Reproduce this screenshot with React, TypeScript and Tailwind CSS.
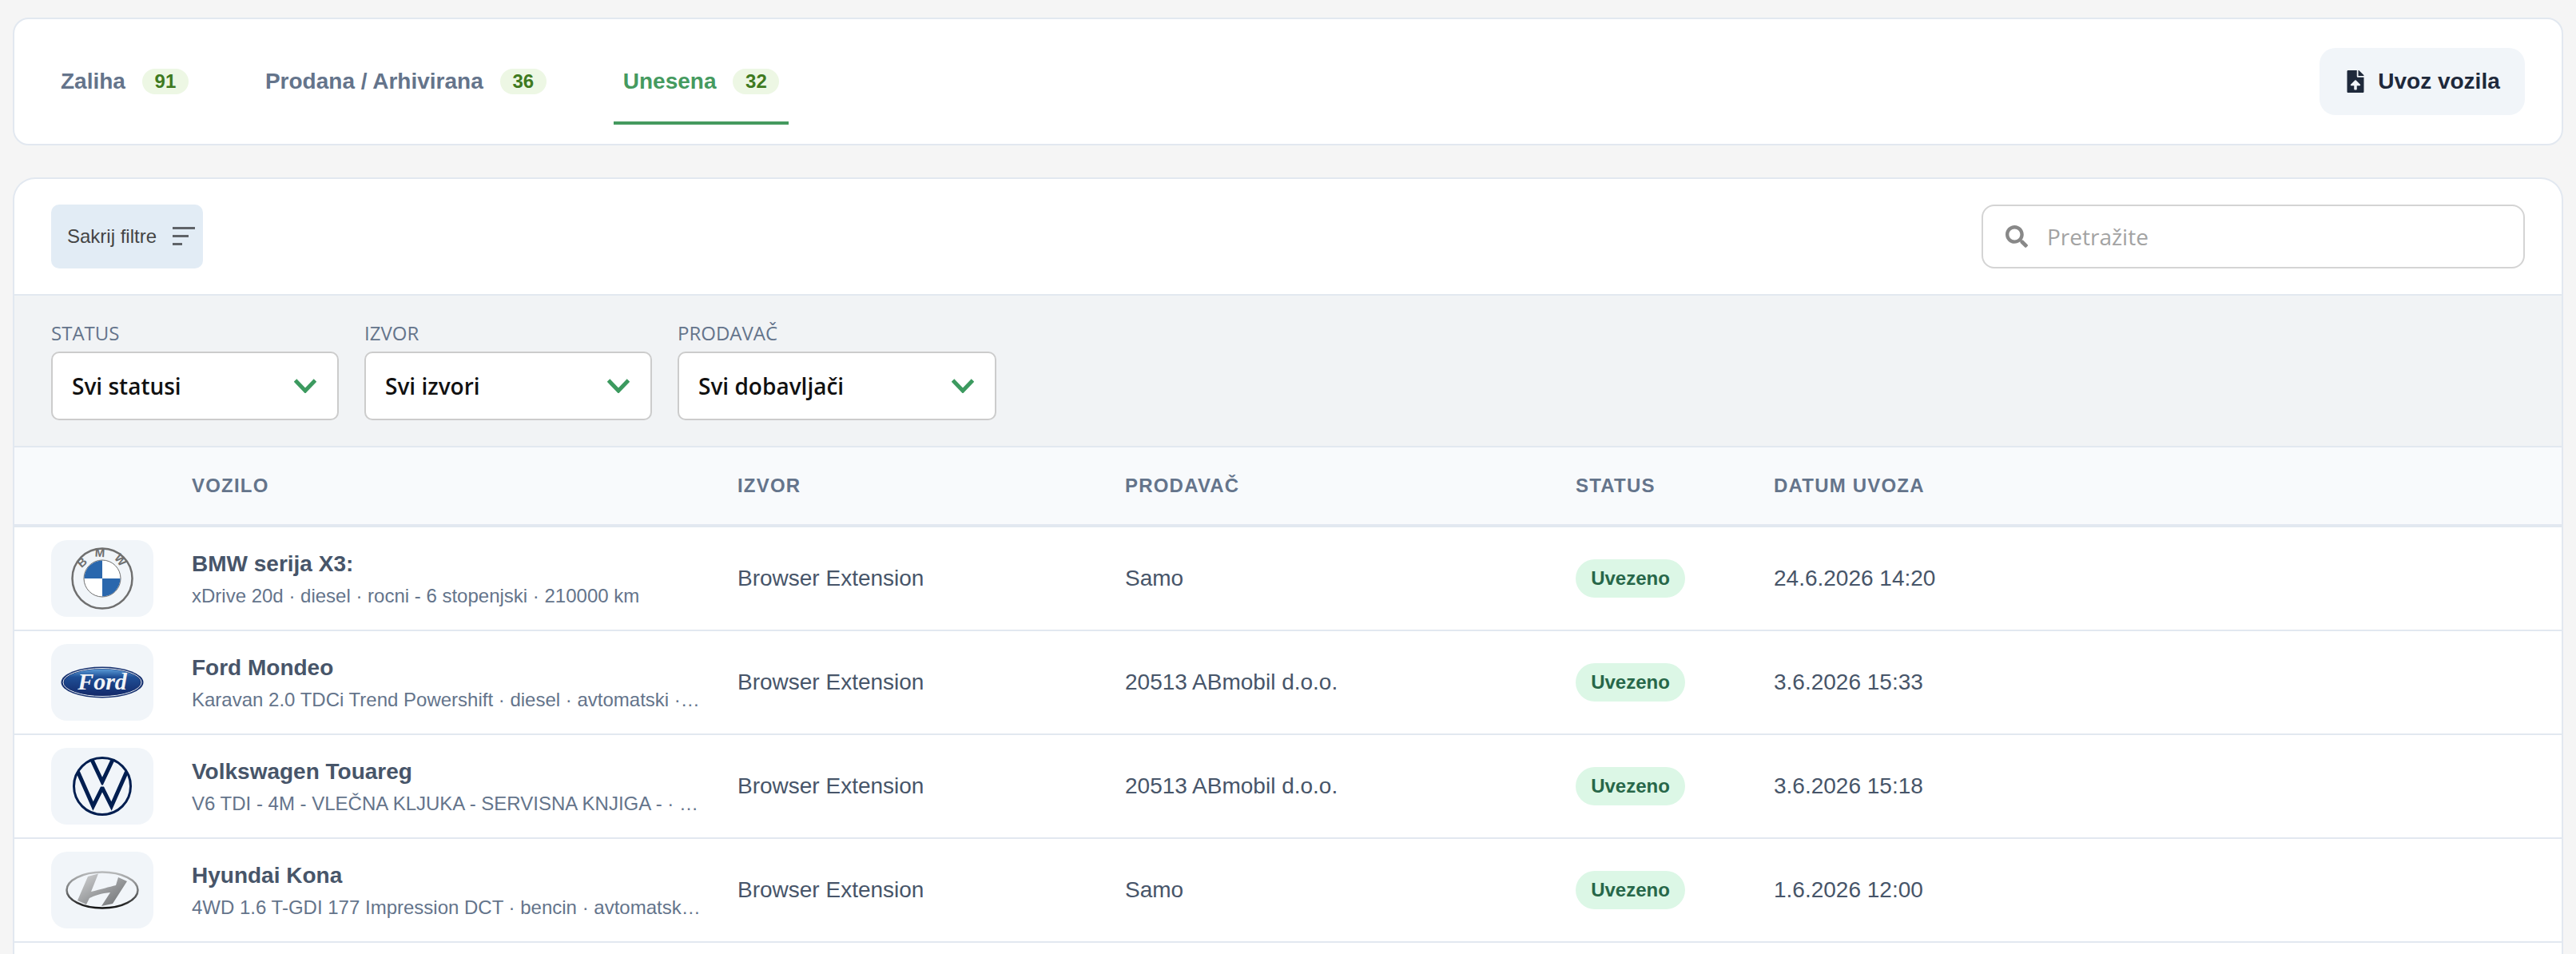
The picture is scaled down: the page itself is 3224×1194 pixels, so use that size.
import React from 'react';
import { FaFileUpload, FaSearch } from 'react-icons/fa';

interface VehicleRow {
  title: string;
  details: string;
  seller: string;
  date: string;
  logo: React.ReactNode;
}

const BmwLogo = () => (
  <svg width="78" height="78" viewBox="0 0 78 78">
    <circle cx="39" cy="39" r="37.500" fill="none" stroke="#6f6f6f" strokeWidth="2.500" />
    <path id="bmw-arc" d="M12 39a27 27 0 0 1 54 0" fill="none" />
    <text fontFamily="'Liberation Sans', sans-serif" fontSize="15" fontWeight="700" fill="#6f6f6f" letterSpacing="10">
      <textPath href="#bmw-arc" startOffset="54%" textAnchor="middle">BMW</textPath>
    </text>
    <circle cx="39" cy="39" r="23" fill="#fff" stroke="#6f6f6f" strokeWidth="1" />
    <path d="M39 39V16.500A22.500 22.500 0 0 0 16.500 39Z" fill="#2a67ad" />
    <path d="M39 39V61.500A22.500 22.500 0 0 0 61.500 39Z" fill="#2a67ad" />
  </svg>
);

const FordLogo = () => (
  <svg width="104" height="40" viewBox="0 0 104 40">
    <defs>
      <linearGradient id="ford-fill" x1="0" y1="0" x2="0" y2="1">
        <stop offset="0" stopColor="#5a9ad6" />
        <stop offset="0.3" stopColor="#1f4f96" />
        <stop offset="1" stopColor="#14296a" />
      </linearGradient>
    </defs>
    <ellipse cx="52" cy="20" rx="51.500" ry="19.500" fill="#16306f" />
    <ellipse cx="52" cy="20" rx="49" ry="17.500" fill="none" stroke="#e8edf3" strokeWidth="1" />
    <ellipse cx="52" cy="20" rx="47.500" ry="16.500" fill="url(#ford-fill)" />
    <text x="52" y="29" textAnchor="middle" fontFamily="'Liberation Serif', serif" fontStyle="italic" fontWeight="700" fontSize="30" fill="#f2f4f7">
      Ford
    </text>
  </svg>
);

const VwLogo = () => (
  <svg width="74" height="74" viewBox="0 0 74 74" fill="none" stroke="#001e50">
    <circle cx="37" cy="37" r="35.500" strokeWidth="3" />
    <path d="M24 4 37 31.500 50 4" strokeWidth="5" />
    <path d="M6.500 19 25.500 62 37 39 48.500 62 67.500 19" strokeWidth="5" />
    <path d="M31 36.500H43" stroke="#f1f5f9" strokeWidth="2" />
  </svg>
);

const HyundaiLogo = () => (
  <svg width="92" height="48" viewBox="0 0 92 48">
    <defs>
      <linearGradient id="hy-ring" x1="0" y1="0" x2="0" y2="1">
        <stop offset="0" stopColor="#b8babb" />
        <stop offset="0.55" stopColor="#707273" />
        <stop offset="1" stopColor="#141414" />
      </linearGradient>
      <linearGradient id="hy-mark" x1="0" y1="0" x2="1" y2="1">
        <stop offset="0" stopColor="#d4d5d6" />
        <stop offset="0.5" stopColor="#9c9ea0" />
        <stop offset="1" stopColor="#6c6e70" />
      </linearGradient>
    </defs>
    <ellipse cx="46" cy="24" rx="44.500" ry="22.500" fill="none" stroke="url(#hy-ring)" strokeWidth="2.500" />
    <path
      d="M28 7 41 3.500 32 26C44 23 55 20 63 18L66 8 77 13 59 41 45 44 56 27C45 28 36 31 30 34L26 42 15 37Z"
      fill="url(#hy-mark)"
    />
  </svg>
);

const rows: VehicleRow[] = [
  { title: 'BMW serija X3:', details: 'xDrive 20d · diesel · rocni - 6 stopenjski · 210000 km', seller: 'Samo', date: '24.6.2026 14:20', logo: <BmwLogo /> },
  { title: 'Ford Mondeo', details: 'Karavan 2.0 TDCi Trend Powershift · diesel · avtomatski · 6 stopenjski · 185000 km', seller: '20513 ABmobil d.o.o.', date: '3.6.2026 15:33', logo: <FordLogo /> },
  { title: 'Volkswagen Touareg', details: 'V6 TDI - 4M - VLEČNA KLJUKA - SERVISNA KNJIGA - · diesel · avtomatski', seller: '20513 ABmobil d.o.o.', date: '3.6.2026 15:18', logo: <VwLogo /> },
  { title: 'Hyundai Kona', details: '4WD 1.6 T-GDI 177 Impression DCT · bencin · avtomatski · 7 stopenjski', seller: 'Samo', date: '1.6.2026 12:00', logo: <HyundaiLogo /> },
];

const Tab = ({ label, count, active }: { label: string; count: number; active?: boolean }) => (
  <div className={`h-[92px] border-b-4 px-3 pt-[22px] ${active ? 'border-[#459a5f] text-[#459a5f]' : 'border-transparent text-[#64748b]'}`}>
    <div className="flex h-8 items-center gap-[21px]">
      <span className="text-[28px] font-bold leading-none">{label}</span>
      <span className="flex h-8 w-[58px] items-center justify-center rounded-2xl bg-[#edf7e4] text-2xl font-bold leading-none text-[#3f7a1f]">{count}</span>
    </div>
  </div>
);

const FilterSelect = ({ label, value, width }: { label: string; value: string; width: string }) => (
  <div className={`flex flex-col ${width}`}>
    <span className="mb-2 h-[32px] font-['Open_Sans'] text-2xl leading-[34px] text-[#64748b]">{label}</span>
    <div className="flex h-[86px] items-center justify-between rounded-[10px] border-2 border-[#cccccc] bg-white pl-6 pr-[26px]">
      <span className="font-['Open_Sans'] text-[28px] font-semibold text-[#111111]">{value}</span>
      <svg width="28" height="18" viewBox="0 0 28 18" fill="none" stroke="#3c9a5f" strokeWidth="5">
        <path d="M1.500 2 14 15 26.500 2" />
      </svg>
    </div>
  </div>
);

const gridCols = 'grid grid-cols-[222px_683px_485px_564px_248px_1fr] items-center';

export default function App() {
  return (
    <div className="flex h-[1194px] flex-col gap-10 overflow-hidden bg-[#f5f5f5] px-4 pt-[22px] font-['Liberation_Sans']">
      {/* Tabs */}
      <div className="flex h-[160px] shrink-0 items-start justify-between rounded-[20px] border-2 border-[#e2e8f0] bg-white pl-[46px] pr-[46px]">
        <div className="mt-10 flex gap-[72px]">
          <Tab label="Zaliha" count={91} />
          <Tab label="Prodana / Arhivirana" count={36} />
          <Tab label="Unesena" count={32} active />
        </div>
        <button className="mt-9 flex h-[84px] w-[257px] items-center justify-center gap-3.5 rounded-[20px] bg-[#f1f5f9] text-[28px] font-bold text-[#1e293b]">
          <FaFileUpload size={28} />
          Uvoz vozila
        </button>
      </div>

      {/* Vehicles */}
      <div className="min-h-0 flex-1 rounded-t-[28px] border-2 border-b-0 border-[#e2e8f0] bg-white">
        <div className="flex h-[144px] items-start justify-between px-[46px] pt-8">
          <button className="flex h-20 w-[190px] items-center justify-between rounded-[10px] bg-[#e2ecf5] pl-5 pr-2.5 text-2xl text-[#444444]">
            Sakrij filtre
            <svg width="28" height="24" viewBox="0 0 28 24" fill="#5f6368">
              <rect x="0" y="0" width="28" height="3" />
              <rect x="0" y="10" width="20" height="3" />
              <rect x="0" y="20" width="12" height="3" />
            </svg>
          </button>
          <div className="flex h-20 w-[680px] items-center gap-6 rounded-2xl border-2 border-[#d4d4d4] px-7">
            <FaSearch size={28} className="text-[#888888]" />
            <span className="font-['Open_Sans'] text-[28px] text-[#a3a3a3]">Pretražite</span>
          </div>
        </div>

        <div className="flex h-[192px] gap-8 border-y-2 border-[#e2e8f0] bg-[#f1f3f5] px-[46px] pt-[30px]">
          <FilterSelect label="STATUS" value="Svi statusi" width="w-[360px]" />
          <FilterSelect label="IZVOR" value="Svi izvori" width="w-[360px]" />
          <FilterSelect label="PRODAVAČ" value="Svi dobavljači" width="w-[399px]" />
        </div>

        <div className={`${gridCols} h-[100px] border-b-4 border-[#e2e8f0] bg-[#f8fafc] text-2xl font-bold tracking-[1.2px] text-[#64748b]`}>
          <span />
          <span>VOZILO</span>
          <span>IZVOR</span>
          <span>PRODAVAČ</span>
          <span>STATUS</span>
          <span>DATUM UVOZA</span>
        </div>

        {rows.map((row) => (
          <div key={row.date} className={`${gridCols} h-[130px] border-b-2 border-[#e2e8f0] text-[28px] text-[#475569]`}>
            <div className="pl-[46px]">
              <div className="flex h-24 w-32 items-center justify-center rounded-[20px] bg-[#f1f5f9]">{row.logo}</div>
            </div>
            <div className="min-w-0 pr-[42px]">
              <div className="text-[28px] font-bold leading-10 text-[#475569]">{row.title}</div>
              <div className="mt-1 truncate text-2xl leading-8 text-[#64748b]">{row.details}</div>
            </div>
            <span>Browser Extension</span>
            <span>{row.seller}</span>
            <span>
              <span className="inline-flex h-12 w-[137px] items-center justify-center rounded-3xl bg-[#dcf7e6] text-2xl font-bold text-[#276749]">Uvezeno</span>
            </span>
            <span>{row.date}</span>
          </div>
        ))}
      </div>
    </div>
  );
}
